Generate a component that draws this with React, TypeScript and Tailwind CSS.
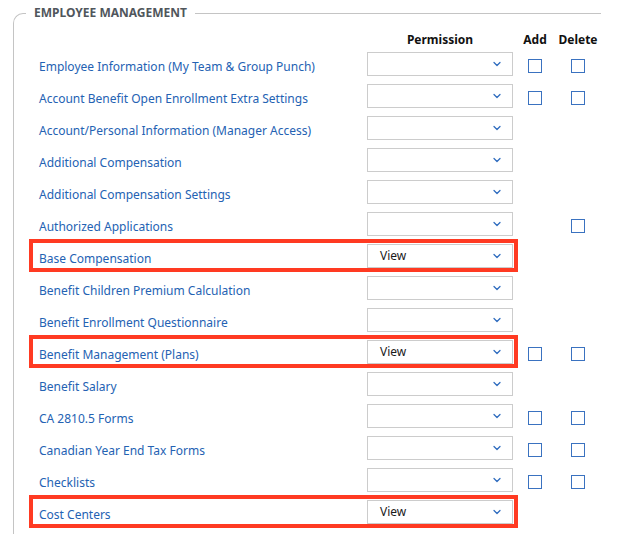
import { ChevronDown } from "lucide-react";

type Row = {
  label: string;
  value?: string;
  add?: boolean;
  del?: boolean;
  highlight?: boolean;
};

const rows: Row[] = [
  { label: "Employee Information (My Team & Group Punch)", add: true, del: true },
  { label: "Account Benefit Open Enrollment Extra Settings", add: true, del: true },
  { label: "Account/Personal Information (Manager Access)" },
  { label: "Additional Compensation" },
  { label: "Additional Compensation Settings" },
  { label: "Authorized Applications", del: true },
  { label: "Base Compensation", value: "View", highlight: true },
  { label: "Benefit Children Premium Calculation" },
  { label: "Benefit Enrollment Questionnaire" },
  { label: "Benefit Management (Plans)", value: "View", add: true, del: true, highlight: true },
  { label: "Benefit Salary" },
  { label: "CA 2810.5 Forms", add: true, del: true },
  { label: "Canadian Year End Tax Forms", add: true, del: true },
  { label: "Checklists", add: true, del: true },
  { label: "Cost Centers", value: "View", highlight: true },
];

function Box() {
  return <span className="mt-[4px] block h-[14px] w-[14px] border-[1.5px] border-[#3a72c0] bg-white" />;
}

export default function App() {
  return (
    <div className="h-[534px] w-[623px] overflow-hidden bg-white font-['Noto_Sans','Open_Sans',sans-serif]">
      <fieldset className="ml-[13px] mt-[4px] w-[588px] rounded-tl-[10px] border-l border-t border-[#c4c4c4] pl-[12px] pb-4">
        <legend className="px-[8px] text-[12px] font-bold leading-[18px] text-[#50565c]">
          EMPLOYEE MANAGEMENT
        </legend>

        <div className="mt-[8px] grid h-[18px] grid-cols-[341px_146px_44px_42px] items-start text-[12px] font-bold leading-[20px] text-[#111]">
          <span />
          <span className="text-center">Permission</span>
          <span className="text-center">Add</span>
          <span className="text-center">Delete</span>
        </div>

        <div className="flex flex-col">
          {rows.map((r) => (
            <div key={r.label} className="relative grid h-[32px] grid-cols-[341px_146px_44px_42px] items-center">
              {r.highlight && (
                <div className="pointer-events-none absolute left-[3px] top-[-1px] h-[33px] w-[489px] border-[4px] border-[#ff3a22]" />
              )}
              <span className="mt-[5px] pl-[13px] text-[12px] leading-[18px] text-[#2462b3]">{r.label}</span>
              <div className="flex h-[24px] items-center justify-between border border-[#cccccc] bg-white pl-[12px] pr-[9px]">
                <span className="text-[12px] leading-[18px] text-[#1a1a1a]">{r.value ?? ""}</span>
                <ChevronDown className="h-[12px] w-[12px] text-[#2f6cbf]" strokeWidth={2.5} />
              </div>
              <div className="flex justify-center">{r.add && <Box />}</div>
              <div className="flex justify-center">{r.del && <Box />}</div>
            </div>
          ))}
        </div>
      </fieldset>
    </div>
  );
}
